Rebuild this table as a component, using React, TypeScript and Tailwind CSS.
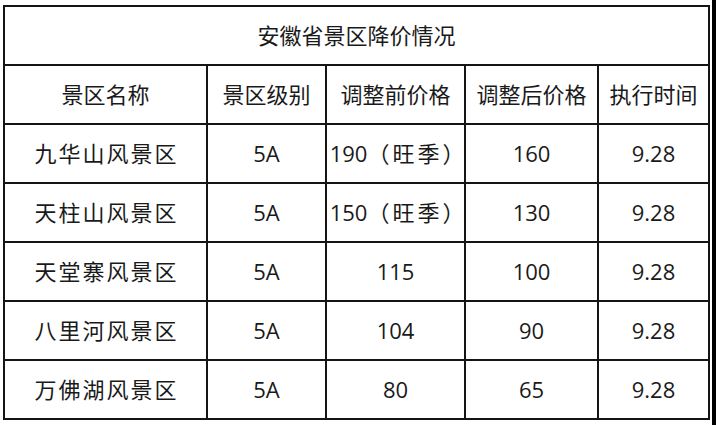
const rows = [
  ['九华山风景区', '5A', '190（旺季）', '160', '9.28'],
  ['天柱山风景区', '5A', '150（旺季）', '130', '9.28'],
  ['天堂寨风景区', '5A', '115', '100', '9.28'],
  ['八里河风景区', '5A', '104', '90', '9.28'],
  ['万佛湖风景区', '5A', '80', '65', '9.28'],
];

const header = ['景区名称', '景区级别', '调整前价格', '调整后价格', '执行时间'];

function Cell({ children }: { children: React.ReactNode }) {
  return (
    <div className="flex h-[59px] items-center justify-center border-r-2 border-b-2 border-[#151515] whitespace-nowrap">
      {children}
    </div>
  );
}

function Value({ v, i }: { v: string; i: number }) {
  if (i === 0) return <span className="pl-[2px] tracking-[2px]">{v}</span>;
  const p = v.indexOf('（');
  if (p < 0) return <>{v}</>;
  return (
    <span className="pl-[6px]">
      {v.slice(0, p)}
      <span className="tracking-[3px]">{v.slice(p)}</span>
    </span>
  );
}

export default function App() {
  return (
    <div
      className="relative flex h-[425px] w-[716px] overflow-hidden bg-white text-[22px] text-[#1a1a1a]"
      style={{ fontFamily: '"Open Sans", "Noto Sans CJK SC", sans-serif' }}
    >
      <div className="ml-[3px] mt-[5px]">
        <div className="grid grid-cols-[203px_119px_139px_133px_111px] border-l-2 border-t-2 border-[#151515]">
          <div className="col-span-5 flex h-[59px] items-center justify-center border-r-2 border-b-2 border-[#151515]">
            安徽省景区降价情况
          </div>
          {header.map((h) => (
            <Cell key={h}>{h}</Cell>
          ))}
          {rows.map((r) =>
            r.map((v, i) => (
              <Cell key={r[0] + i}>
                <Value v={v} i={i} />
              </Cell>
            )),
          )}
        </div>
      </div>
      <div className="absolute right-0 top-0 h-full w-[4px] bg-black" />
    </div>
  );
}
